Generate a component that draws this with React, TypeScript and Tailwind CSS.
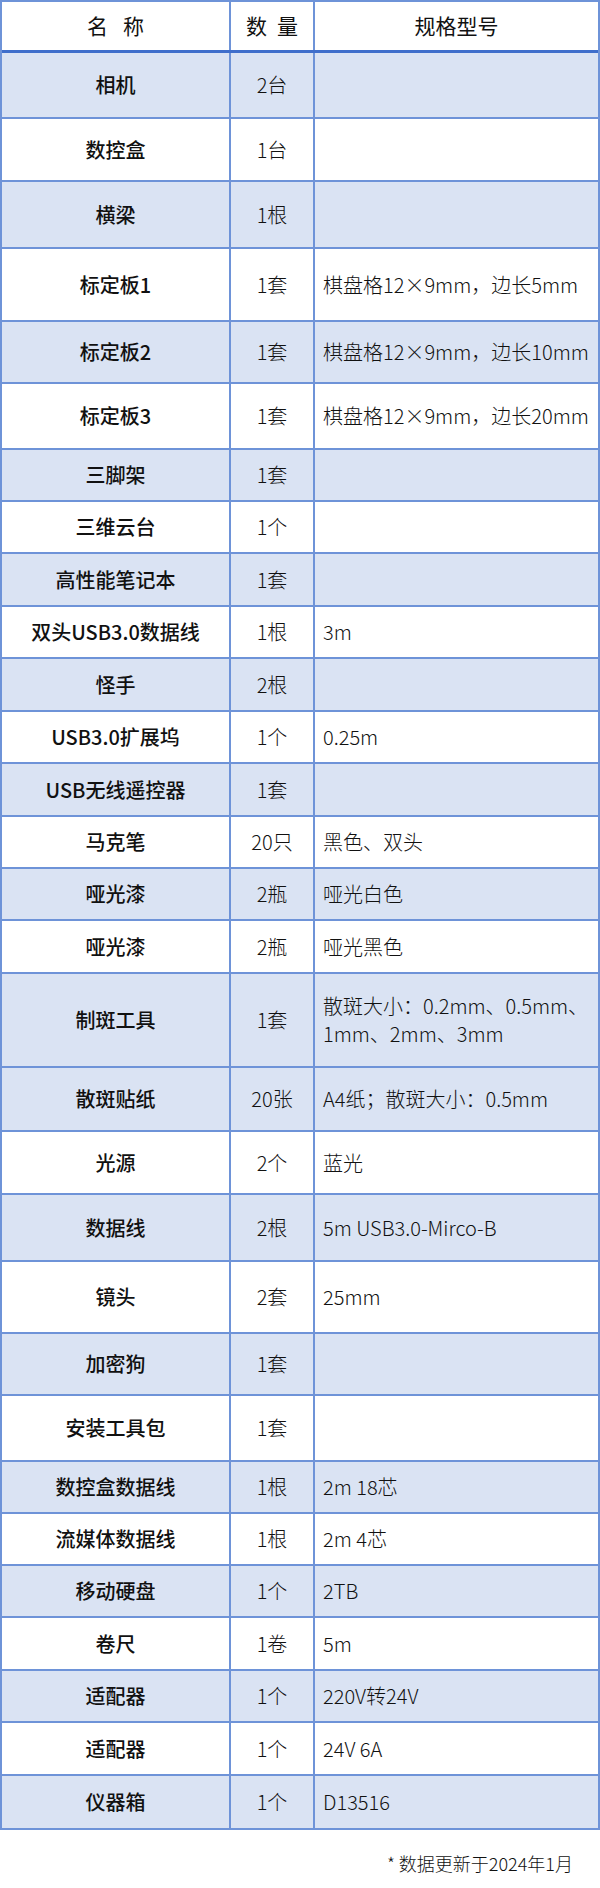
const rows = [
  { name: '相机', qty: '2台', spec: '', h: 'h-[66px]', blue: true },
  { name: '数控盒', qty: '1台', spec: '', h: 'h-[63px]', blue: false },
  { name: '横梁', qty: '1根', spec: '', h: 'h-[67px]', blue: true },
  { name: '标定板1', qty: '1套', spec: '棋盘格12×9mm，边长5mm', h: 'h-[73px]', blue: false },
  { name: '标定板2', qty: '1套', spec: '棋盘格12×9mm，边长10mm', h: 'h-[62px]', blue: true },
  { name: '标定板3', qty: '1套', spec: '棋盘格12×9mm，边长20mm', h: 'h-[66px]', blue: false },
  { name: '三脚架', qty: '1套', spec: '', h: 'h-[52px]', blue: true },
  { name: '三维云台', qty: '1个', spec: '', h: 'h-[52px]', blue: false },
  { name: '高性能笔记本', qty: '1套', spec: '', h: 'h-[53px]', blue: true },
  { name: '双头USB3.0数据线', qty: '1根', spec: '3m', h: 'h-[52px]', blue: false },
  { name: '怪手', qty: '2根', spec: '', h: 'h-[53px]', blue: true },
  { name: 'USB3.0扩展坞', qty: '1个', spec: '0.25m', h: 'h-[52px]', blue: false },
  { name: 'USB无线遥控器', qty: '1套', spec: '', h: 'h-[53px]', blue: true },
  { name: '马克笔', qty: '20只', spec: '黑色、双头', h: 'h-[52px]', blue: false },
  { name: '哑光漆', qty: '2瓶', spec: '哑光白色', h: 'h-[52px]', blue: true },
  { name: '哑光漆', qty: '2瓶', spec: '哑光黑色', h: 'h-[53px]', blue: false },
  { name: '制斑工具', qty: '1套', spec: 'wrap', h: 'h-[94px]', blue: true },
  { name: '散斑贴纸', qty: '20张', spec: 'A4纸；散斑大小：0.5mm', h: 'h-[64px]', blue: true },
  { name: '光源', qty: '2个', spec: '蓝光', h: 'h-[63px]', blue: false },
  { name: '数据线', qty: '2根', spec: '5m USB3.0-Mirco-B', h: 'h-[67px]', blue: true },
  { name: '镜头', qty: '2套', spec: '25mm', h: 'h-[72px]', blue: false },
  { name: '加密狗', qty: '1套', spec: '', h: 'h-[62px]', blue: true },
  { name: '安装工具包', qty: '1套', spec: '', h: 'h-[66px]', blue: false },
  { name: '数控盒数据线', qty: '1根', spec: '2m 18芯', h: 'h-[52px]', blue: true },
  { name: '流媒体数据线', qty: '1根', spec: '2m 4芯', h: 'h-[52px]', blue: false },
  { name: '移动硬盘', qty: '1个', spec: '2TB', h: 'h-[52px]', blue: true },
  { name: '卷尺', qty: '1卷', spec: '5m', h: 'h-[53px]', blue: false },
  { name: '适配器', qty: '1个', spec: '220V转24V', h: 'h-[52px]', blue: true },
  { name: '适配器', qty: '1个', spec: '24V 6A', h: 'h-[53px]', blue: false },
  { name: '仪器箱', qty: '1个', spec: 'D13516', h: 'h-[52px]', blue: true },
];

export default function App() {
  return (
    <div className="w-[600px] bg-white text-[#111] font-['Noto_Sans_CJK_SC',sans-serif]">
      <div className="border-2 border-[#6e93d8]">
        {/* Header */}
        <div className="grid grid-cols-[229px_84px_1fr] h-[51px] border-b-[3px] border-[#3f6ecb] text-[21px]">
          <div className="flex items-center justify-center gap-[15px] border-r-2 border-[#6e93d8]">
            <span>名</span>
            <span>称</span>
          </div>
          <div className="flex items-center justify-center gap-[10px] border-r-2 border-[#6e93d8]">
            <span>数</span>
            <span>量</span>
          </div>
          <div className="flex items-center justify-center">规格型号</div>
        </div>

        {rows.map((r, i) => (
          <div
            key={i}
            className={`grid grid-cols-[229px_84px_1fr] text-[20px] ${r.h} ${i < rows.length - 1 ? 'border-b-2' : ''} border-[#6e93d8] ${r.blue ? 'bg-[#dae3f3]' : 'bg-white'}`}
          >
            <div className="flex items-center justify-center font-medium border-r-2 border-[#6e93d8]">{r.name}</div>
            <div className="flex items-center justify-center font-light border-r-2 border-[#6e93d8]">{r.qty}</div>
            <div className="flex items-center pl-[8px] font-light leading-[28px]">
              {r.spec === 'wrap' ? (
                <span>
                  散斑大小：0.2mm、0.5mm、
                  <br />
                  1mm、2mm、3mm
                </span>
              ) : (
                r.spec
              )}
            </div>
          </div>
        ))}
      </div>

      {/* Footer */}
      <div className="pt-[21px] pr-[27px] text-right text-[18px] leading-[24px] font-light">
        * 数据更新于2024年1月
      </div>
    </div>
  );
}
